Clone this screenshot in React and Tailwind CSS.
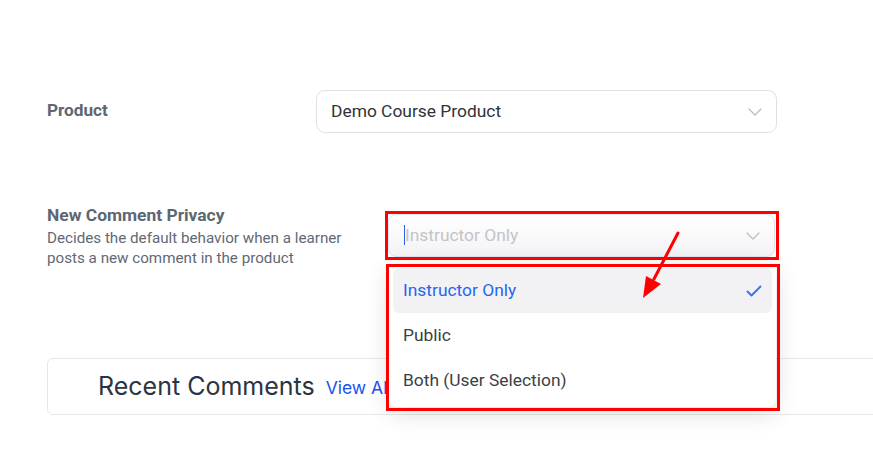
import React from 'react';

const OPTIONS = ['Instructor Only', 'Public', 'Both (User Selection)'];

function Chevron() {
  return (
    <svg width="14" height="8" viewBox="0 0 14 8" fill="none" className="shrink-0">
      <path d="M1 1l6 6 6-6" stroke="#b9bcc2" strokeWidth="1.2" strokeLinecap="round" strokeLinejoin="round" />
    </svg>
  );
}

export default function App() {
  return (
    <div className="relative w-[873px] h-[459px] overflow-hidden bg-white font-['Roboto',sans-serif]">
      <div className="pt-[90px] pl-[47px]">
        {/* Product */}
        <div className="flex items-start">
          <div className="w-[269px] pt-[8px] text-[17.2px] leading-[24px] font-bold text-[#5d6772]">Product</div>
          <div className="w-[461px] h-[43px] flex items-center justify-between pl-[14px] pr-[14px] rounded-[9px] border border-[#dfe0e6] bg-white">
            <span className="text-[17.4px] text-[#2f3236]">Demo Course Product</span>
            <Chevron />
          </div>
        </div>

        {/* New Comment Privacy */}
        <div className="flex items-start mt-[72px]">
          <div className="w-[341px]">
            <div className="text-[17.4px] leading-[20px] font-bold text-[#5d6772]">New Comment Privacy</div>
            <div className="mt-[3px] text-[15.2px] leading-[20px] text-[#5f6975]">
              Decides the default behavior when a learner
              <br />
              posts a new comment in the product
            </div>
          </div>
          <div className="relative mt-[9px]">
            <div className="w-[387px] h-[43px] flex items-center justify-between pl-[15px] pr-[14px] rounded-[8px] border border-[#dbe3f3] bg-gradient-to-b from-white to-[#f3f3f6]">
              <div className="flex items-center">
                <span className="w-px h-[20px] bg-[#2b62e0]" />
                <span className="text-[17.4px] text-[#c2c4c8]">Instructor Only</span>
              </div>
              <Chevron />
            </div>
            {/* dropdown */}
            <div className="absolute left-[1px] top-[50px] z-10 w-[387px] rounded-[8px] bg-white p-[4px] shadow-[0_6px_24px_rgba(0,0,0,0.14)]">
              {OPTIONS.map((opt, i) => (
                <div
                  key={opt}
                  className={`h-[45px] flex items-center justify-between pl-[10px] pr-[10px] rounded-[6px] text-[17.4px] ${
                    i === 0 ? 'bg-[#f2f2f5] text-[#2566ef]' : 'text-[#3b3f45]'
                  }`}
                >
                  <span>{opt}</span>
                  {i === 0 && (
                    <svg width="16" height="12" viewBox="0 0 16 12" fill="none">
                      <path d="M1.5 6.5l4 4 9-9" stroke="#3a74ee" strokeWidth="2" strokeLinecap="round" strokeLinejoin="round" />
                    </svg>
                  )}
                </div>
              ))}
            </div>
          </div>
        </div>

        {/* Recent Comments card */}
        <div className="mt-[90px] w-[840px] h-[57px] flex items-center pl-[50px] rounded-[6px] border border-[#e6e7ea]">
          <span className="font-['Inter',sans-serif] text-[25px] text-[#2b3442]">Recent Comments</span>
          <span className="ml-[11px] mt-[4px] font-['Inter',sans-serif] text-[17.5px] text-[#1a52f2]">View All</span>
        </div>
      </div>

      {/* annotations */}
      <div className="absolute left-[385px] top-[211px] w-[394px] h-[49px] border-[3px] border-[#ff0000] z-20" />
      <div className="absolute left-[386px] top-[264px] w-[394px] h-[147px] border-[3px] border-[#ff0000] z-20" />
      <svg className="absolute left-0 top-0 z-30 pointer-events-none" width="873" height="459">
        <line x1="678" y1="233" x2="654" y2="279" stroke="#ff0000" strokeWidth="3" strokeLinecap="round" />
        <polygon points="643,298 646,276 661,284" fill="#ff0000" />
      </svg>
    </div>
  );
}
